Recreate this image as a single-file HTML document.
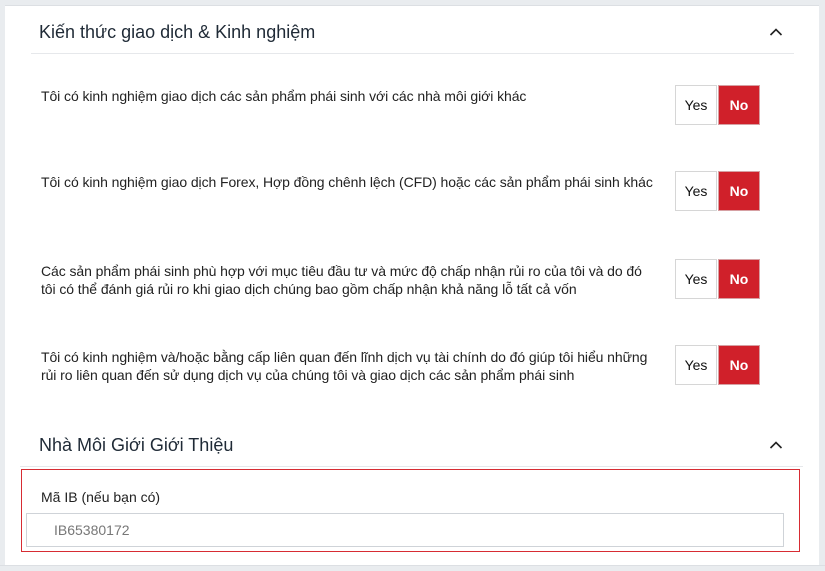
<!DOCTYPE html>
<html><head><meta charset="utf-8"><style>
*{margin:0;padding:0;box-sizing:border-box}
body{width:825px;height:571px;background:#e9ecef;font-family:"Liberation Sans",Roboto,sans-serif;position:relative;overflow:hidden}
.card{position:absolute;left:5px;top:5px;width:814px;height:560px;background:#fff;border-top:1px solid #dcdfe3}
.h{position:absolute;left:39px;font-size:18px;color:#1f2a36}
.sep{position:absolute;left:31px;width:763px;height:1px;background:#e6e8eb}
.chev{position:absolute;left:769px;width:14px;height:10px}
.q{position:absolute;left:41px;width:618px;font-size:14px;line-height:18px;color:#222;letter-spacing:-0.08px}
.yes,.no{position:absolute;width:42px;height:40px;font-size:14px;line-height:38px;text-align:center;border:1px solid #d6d6d6}
.yes{left:675px;color:#111;background:#fff}
.no{left:718px;background:#d0202a;color:#fff;font-weight:bold;border-color:#d6a0a3}
.box{position:absolute;left:21px;top:469px;width:779px;height:83px;border:1px solid #d72c33}
.lbl{position:absolute;left:41px;top:489px;font-size:14px;color:#222}
.inp{position:absolute;left:26px;top:513px;width:758px;height:34px;border:1px solid #cfd3d8;font-size:14px;color:#777;padding:8px 0 0 27px}
.bot{position:absolute;left:0;top:565px;width:825px;height:6px;background:#e9ecef;border-top:1px solid #dcdfe3}
</style></head><body>
<div class="card"></div>
<div class="h" style="top:22px">Kiến thức giao dịch &amp; Kinh nghiệm</div>
<svg class="chev" style="top:27px" viewBox="0 0 14 10"><path d="M1.5 8 L7 2.5 L12.5 8" fill="none" stroke="#222" stroke-width="1.6"/></svg>
<div class="sep" style="top:53px"></div>
<div class="q" style="top:87px">Tôi có kinh nghiệm giao dịch các sản phẩm phái sinh với các nhà môi giới khác</div>
<div class="yes" style="top:85px">Yes</div><div class="no" style="top:85px">No</div>
<div class="q" style="top:173px">Tôi có kinh nghiệm giao dịch Forex, Hợp đồng chênh lệch (CFD) hoặc các sản phẩm phái sinh khác</div>
<div class="yes" style="top:171px">Yes</div><div class="no" style="top:171px">No</div>
<div class="q" style="top:262px">Các sản phẩm phái sinh phù hợp với mục tiêu đầu tư và mức độ chấp nhận rủi ro của tôi và do đó<br>tôi có thể đánh giá rủi ro khi giao dịch chúng bao gồm chấp nhận khả năng lỗ tất cả vốn</div>
<div class="yes" style="top:259px">Yes</div><div class="no" style="top:259px">No</div>
<div class="q" style="top:348px">Tôi có kinh nghiệm và/hoặc bằng cấp liên quan đến lĩnh dịch vụ tài chính do đó giúp tôi hiểu những<br>rủi ro liên quan đến sử dụng dịch vụ của chúng tôi và giao dịch các sản phẩm phái sinh</div>
<div class="yes" style="top:345px">Yes</div><div class="no" style="top:345px">No</div>
<div class="h" style="top:435px">Nhà Môi Giới Giới Thiệu</div>
<svg class="chev" style="top:440px" viewBox="0 0 14 10"><path d="M1.5 8 L7 2.5 L12.5 8" fill="none" stroke="#222" stroke-width="1.6"/></svg>
<div class="sep" style="top:466px;left:20px;width:783px"></div>
<div class="box"></div>
<div class="lbl">Mã IB (nếu bạn có)</div>
<div class="inp">IB65380172</div>
<div class="bot"></div>
</body></html>
